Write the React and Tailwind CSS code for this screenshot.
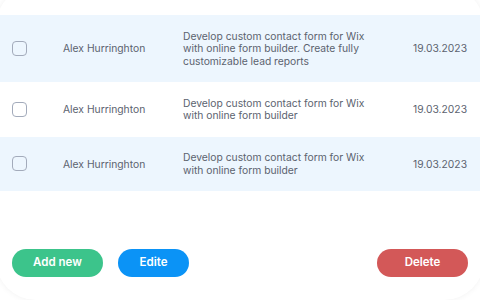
export default function App() {
  const rows = [
    { desc: "Develop custom contact form for Wix with online form builder. Create fully customizable lead reports", bg: "bg-[#edf6fe]" },
    { desc: "Develop custom contact form for Wix with online form builder", bg: "bg-white" },
    { desc: "Develop custom contact form for Wix with online form builder", bg: "bg-[#edf6fe]" },
  ];
  return (
    <div className="w-[480px] h-[300px] overflow-hidden bg-white relative" style={{ fontFamily: "Inter, 'Noto Sans', sans-serif" }}>
      <div className="absolute left-[-4px] top-[-14px] w-[488px] h-[314px] rounded-[40px] bg-white shadow-[0_0_6px_rgba(0,0,0,0.06)]" />
      <div className="relative flex flex-col h-full">
        <div className="mt-[15px] flex flex-col">
          {rows.map((r, i) => (
            <div key={i} className={`flex items-center ${r.bg} py-[14.75px] text-[10.3px] leading-[12.5px] text-[#5c636f]`}>
              <div className="w-[63px] pl-[12px] flex items-center">
                <div className="w-[15px] h-[15px] rounded-[4px] border-[1.5px] border-[#a3abbb] bg-transparent" />
              </div>
              <div className="w-[120px]">Alex Hurringhton</div>
              <div className="w-[200px]">{r.desc}</div>
              <div className="ml-auto pr-[13px]">19.03.2023</div>
            </div>
          ))}
        </div>
        <div className="mt-auto mb-[23px] flex items-center px-[12px] text-[11.5px] font-semibold text-white">
          <button className="w-[91px] h-[28px] rounded-full bg-[#3cc48b]">Add new</button>
          <button className="ml-[15px] w-[71px] h-[28px] rounded-full bg-[#0b93f6]">Edite</button>
          <button className="ml-auto w-[91px] h-[28px] rounded-full bg-[#d35858]">Delete</button>
        </div>
      </div>
    </div>
  );
}
